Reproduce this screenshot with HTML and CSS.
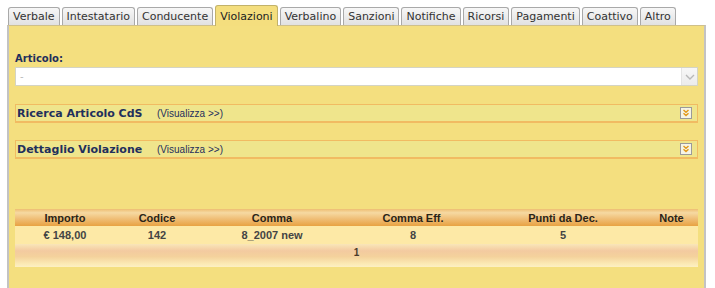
FILE: index.html
```html
<!DOCTYPE html>
<html>
<head>
    <title>Violazioni</title>
    <link rel="stylesheet" href="styles.css">
</head>
<body>
    <div class="tabs">
        <div class="tab">Verbale</div>
        <div class="tab">Intestatario</div>
        <div class="tab">Conducente</div>
        <div class="tab active">Violazioni</div>
        <div class="tab">Verbalino</div>
        <div class="tab">Sanzioni</div>
        <div class="tab">Notifiche</div>
        <div class="tab">Ricorsi</div>
        <div class="tab">Pagamenti</div>
        <div class="tab">Coattivo</div>
        <div class="tab">Altro</div>
    </div>

    <div class="panel">
        <div class="field-label">Articolo:</div>
        <div class="select">
            <span class="select-value">-</span>
            <span class="select-btn">
                <svg width="10" height="6" viewBox="0 0 10 6"><path d="M1 1 L5 5 L9 1" fill="none" stroke="#b8b8b8" stroke-width="1.4"/></svg>
            </span>
        </div>

        <div class="section first">
            <span class="section-title">Ricerca Articolo CdS</span>
            <span class="section-link">(Visualizza &gt;&gt;)</span>
            <span class="section-toggle">
                <svg width="8" height="8" viewBox="0 0 8 8"><path d="M1.5 1 L4 3.2 L6.5 1 M1.5 4.3 L4 6.5 L6.5 4.3" fill="none" stroke="#e39a1c" stroke-width="1.5"/></svg>
            </span>
        </div>

        <div class="section">
            <span class="section-title">Dettaglio Violazione</span>
            <span class="section-link">(Visualizza &gt;&gt;)</span>
            <span class="section-toggle">
                <svg width="8" height="8" viewBox="0 0 8 8"><path d="M1.5 1 L4 3.2 L6.5 1 M1.5 4.3 L4 6.5 L6.5 4.3" fill="none" stroke="#e39a1c" stroke-width="1.5"/></svg>
            </span>
        </div>

        <table class="grid">
            <colgroup>
                <col class="c1"><col class="c2"><col class="c3"><col class="c4"><col class="c5"><col class="c6">
            </colgroup>
            <tr class="grid-head">
                <th>Importo</th>
                <th>Codice</th>
                <th>Comma</th>
                <th>Comma Eff.</th>
                <th>Punti da Dec.</th>
                <th>Note</th>
            </tr>
            <tr class="grid-row">
                <td>€ 148,00</td>
                <td>142</td>
                <td>8_2007 new</td>
                <td>8</td>
                <td>5</td>
                <td></td>
            </tr>
            <tr class="grid-pager">
                <td colspan="6"><span class="page">1</span></td>
            </tr>
        </table>
    </div>
</body>
</html>
```

FILE: styles.css
```css
body {
    margin: 0;
    background-color: #fff;
    font-family: "DejaVu Sans", Verdana, sans-serif;
}

.tabs {
    display: flex;
    align-items: flex-end;
    gap: 2px;
    padding: 5px 0 0 8px;
    height: 20px;
}

.tab {
    height: 18px;
    line-height: 18px;
    padding: 0 4px;
    font-size: 11px;
    color: #333;
    border: 1px solid #a9a9a9;
    border-bottom: none;
    border-radius: 3px 3px 0 0;
    background: linear-gradient(#f7f7f7, #e1e1e1);
    box-sizing: border-box;
}

.tab.active {
    height: 21px;
    line-height: 21px;
    color: #222;
    background: #f4de7e;
    border-color: #c2b26a;
    position: relative;
    margin-bottom: -1px;
}

.panel {
    margin-left: 7px;
    width: 699px;
    height: 270px;
    box-sizing: border-box;
    background-color: #f4df7f;
    border-left: 2px solid #c3c3c3;
    border-right: 2px solid #c3c3c3;
    border-top: 1px solid #cfc08a;
    padding: 27px 6px 0 6px;
}

.field-label {
    font-size: 10px;
    font-weight: bold;
    color: #1f2f5c;
    height: 13px;
}

.select {
    margin-top: 1px;
    height: 19px;
    display: flex;
    align-items: stretch;
    background-color: #fff;
    border: 1px solid #d4d4c4;
    box-sizing: border-box;
}

.select-value {
    flex: 1;
    padding-left: 4px;
    font-size: 10px;
    line-height: 17px;
    color: #bbb;
}

.select-btn {
    width: 15px;
    display: flex;
    align-items: center;
    justify-content: center;
    background: linear-gradient(#f7f7f7, #ececec);
    border-left: 1px solid #e4e4e4;
}

.section {
    margin-top: 17px;
    height: 19px;
    display: flex;
    align-items: center;
    background-color: #efe58c;
    border: 1px solid #f1bb62;
    border-bottom-width: 2px;
    box-sizing: border-box;
}

.section.first {
    margin-top: 18px;
}

.section-title {
    width: 140px;
    padding-left: 1px;
    font-size: 11px;
    font-weight: bold;
    color: #1f2f5c;
}

.section-link {
    flex: 1;
    font-family: "Liberation Sans", Arial, sans-serif;
    font-size: 10px;
    color: #1f2f5c;
}

.section-toggle {
    width: 10px;
    height: 10px;
    margin-right: 5px;
    display: flex;
    align-items: center;
    justify-content: center;
    background-color: #f6f4e6;
    border: 1px solid #9a9a9a;
}

.grid {
    margin-top: 50px;
    width: 683px;
    border-collapse: collapse;
    table-layout: fixed;
    font-family: "Liberation Sans", Arial, sans-serif;
    font-size: 11px;
    font-weight: bold;
}

.c1 { width: 100px; }
.c2 { width: 84px; }
.c3 { width: 146px; }
.c4 { width: 136px; }
.c5 { width: 164px; }
.c6 { width: 53px; }

.grid th, .grid td {
    padding: 0;
    text-align: center;
}

.grid-head th {
    height: 17px;
    color: #2a2418;
    background: linear-gradient(#eebd72 0%, #f6d9a2 22%, #f0c07a 55%, #e8a242 100%);
}

.grid-row td {
    height: 18px;
    color: #444;
    background-color: #fde9a6;
}

.grid-pager td {
    height: 23px;
    background: linear-gradient(#f9e6b8 0%, #f3caa0 30%, #f4d29c 55%, #fbe9b4 85%, #fdf0c4 100%);
    vertical-align: top;
}

.page {
    display: inline-block;
    padding-top: 3px;
    font-size: 10px;
    color: #4a3a2a;
}
```
